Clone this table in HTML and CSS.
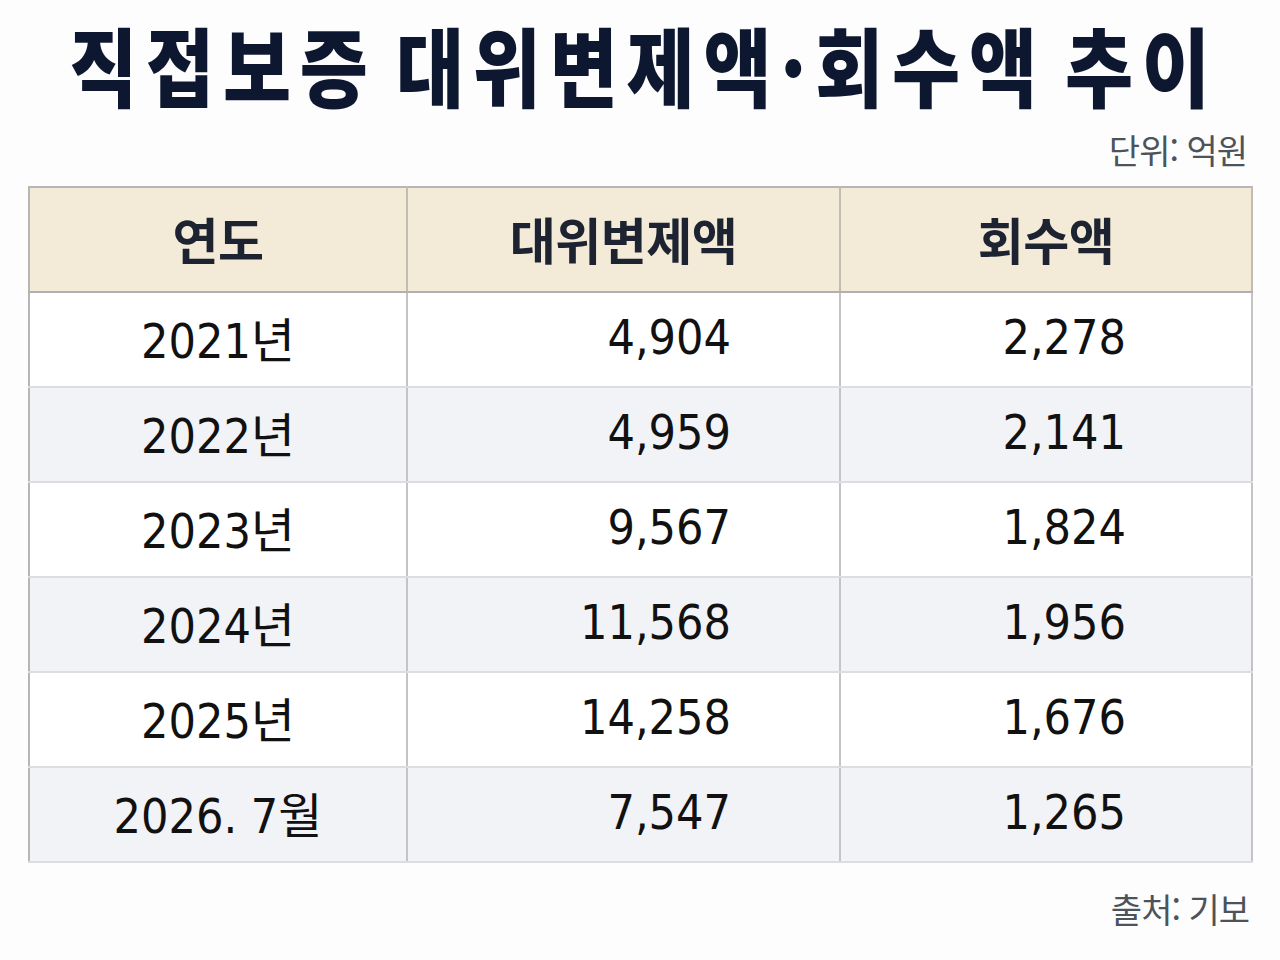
FILE: index.html
```html
<!DOCTYPE html>
<html lang="ko">
<head>
<meta charset="utf-8">
<title>직접보증 대위변제액·회수액 추이</title>
<link rel="stylesheet" href="styles.css">
</head>
<body>
<div class="page">
  <div class="title-wrap">
    <h1 class="title">직접보증 대위변제액·회수액 추이</h1>
  </div>
  <div class="unit">단위: 억원</div>
  <table class="data">
    <colgroup>
      <col class="c-year">
      <col class="c-sub">
      <col class="c-rec">
    </colgroup>
    <thead>
      <tr>
        <th>연도</th>
        <th>대위변제액</th>
        <th>회수액</th>
      </tr>
    </thead>
    <tbody>
      <tr><td class="year">2021년</td><td class="num n2">4,904</td><td class="num n3">2,278</td></tr>
      <tr><td class="year">2022년</td><td class="num n2">4,959</td><td class="num n3">2,141</td></tr>
      <tr><td class="year">2023년</td><td class="num n2">9,567</td><td class="num n3">1,824</td></tr>
      <tr><td class="year">2024년</td><td class="num n2">11,568</td><td class="num n3">1,956</td></tr>
      <tr><td class="year">2025년</td><td class="num n2">14,258</td><td class="num n3">1,676</td></tr>
      <tr><td class="year">2026. 7월</td><td class="num n2">7,547</td><td class="num n3">1,265</td></tr>
    </tbody>
  </table>
  <div class="source">출처: 기보</div>
</div>
</body>
</html>
```
FILE: styles.css
```css
html, body {
  margin: 0;
  padding: 0;
  background: #fdfdfd;
}

body {
  font-family: "Noto Sans CJK KR", "Noto Sans", sans-serif;
  color: #111;
}

.page {
  width: 1280px;
  height: 960px;
  padding: 0 29px 0 28px;
  box-sizing: border-box;
}

.title-wrap {
  display: flex;
  justify-content: center;
  align-items: center;
  height: 128px;
}

.title {
  margin: 0;
  flex: none;
  white-space: nowrap;
  font-family: "Noto Sans CJK KR", sans-serif;
  font-weight: 900;
  font-size: 74px;
  line-height: 108px;
  letter-spacing: 8.8px;
  word-spacing: -10.3px;
  color: #0d1730;
  transform: scaleY(1.16);
  transform-origin: center;
  padding-left: 9px;
}

.unit {
  text-align: right;
  font-size: 34px;
  font-weight: 400;
  line-height: 50px;
  letter-spacing: -1px;
  color: #4d535b;
  padding-right: 4px;
  margin-top: -3px;
  margin-bottom: 11px;
}

.data {
  width: 1223px;
  border-collapse: collapse;
  border: 2px solid #b6b6b6;
  table-layout: fixed;
}

.c-year { width: 378px; }
.c-sub { width: 433px; }
.c-rec { width: 412px; }

.data th {
  height: 99px;
  padding: 0 0 4px 0;
  background: #f3ebd8;
  font-weight: 700;
  font-size: 50px;
  letter-spacing: -0.5px;
  color: #1d2330;
  border-right: 2px solid #c0bcb2;
  border-bottom: 2px solid #b0b0b0;
  text-align: center;
  vertical-align: middle;
}

.data td {
  height: 87px;
  padding: 0 0 6px 0;
  font-family: "DejaVu Sans Condensed", "DejaVu Sans", "Noto Sans CJK KR", sans-serif;
  font-size: 48px;
  color: #111;
  border-right: 2px solid #c4c4c4;
  border-bottom: 2px solid #dcdde0;
  vertical-align: middle;
}

.data tbody tr:nth-child(even) td {
  background: #f2f3f6;
}

.data tbody tr:nth-child(odd) td {
  background: #ffffff;
}

.year {
  text-align: center;
}

.num {
  text-align: right;
}

.n2 { padding-right: 108px !important; }
.n3 { padding-right: 125px !important; }

.source {
  text-align: right;
  font-size: 34px;
  line-height: 40px;
  letter-spacing: -1px;
  color: #4d535b;
  margin-top: 26px;
  padding-right: 2px;
}
```
